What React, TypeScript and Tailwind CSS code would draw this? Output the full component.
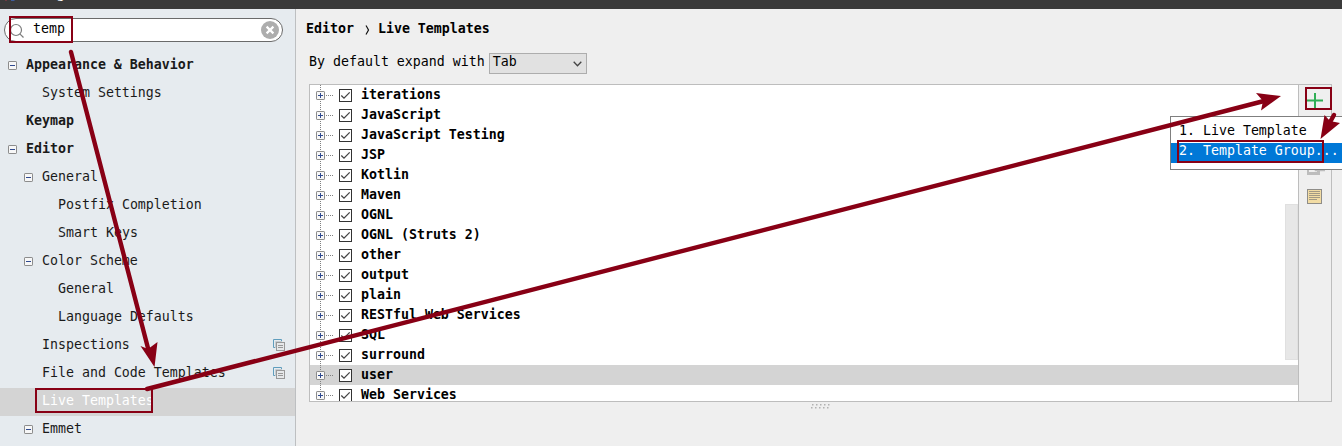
import React from "react";

type NavItem = {
  label: string;
  indent: string;
  bold?: boolean;
  expander?: boolean;
  copy?: boolean;
  selected?: boolean;
};

const nav: NavItem[] = [
  { label: "Appearance & Behavior", indent: "pl-2", bold: true, expander: true },
  { label: "System Settings", indent: "pl-6" },
  { label: "Keymap", indent: "pl-2", bold: true },
  { label: "Editor", indent: "pl-2", bold: true, expander: true },
  { label: "General", indent: "pl-6", expander: true },
  { label: "Postfix Completion", indent: "pl-10" },
  { label: "Smart Keys", indent: "pl-10" },
  { label: "Color Scheme", indent: "pl-6", expander: true },
  { label: "General", indent: "pl-10" },
  { label: "Language Defaults", indent: "pl-10" },
  { label: "Inspections", indent: "pl-6", copy: true },
  { label: "File and Code Templates", indent: "pl-6", copy: true },
  { label: "Live Templates", indent: "pl-6", selected: true },
  { label: "Emmet", indent: "pl-6", expander: true },
];

const groups = [
  "iterations",
  "JavaScript",
  "JavaScript Testing",
  "JSP",
  "Kotlin",
  "Maven",
  "OGNL",
  "OGNL (Struts 2)",
  "other",
  "output",
  "plain",
  "RESTful Web Services",
  "SQL",
  "surround",
  "user",
  "Web Services",
];

function Expander() {
  return (
    <svg width="9" height="9" viewBox="0 0 9 9" className="block shrink-0">
      <rect x="0.5" y="0.5" width="8" height="8" rx="0.6" fill="#f7f7f7" stroke="#8c8c8c" />
      <path d="M2 4.5H7" stroke="#2f4a90" />
    </svg>
  );
}

function CopyIcon() {
  return (
    <svg width="12" height="12" viewBox="0 0 12 12" className="block">
      <path d="M3 8.5H0.5V0.5H8.5V3" fill="none" stroke="#5f9dbd" />
      <path d="M2.500 9V2.500H9" fill="none" stroke="#c3ccd2" />
      <rect x="3.5" y="3.5" width="8" height="8" fill="#e6e8ea" stroke="#989898" />
      <path d="M5 6.5H10M5 8.5H10" stroke="#989898" />
    </svg>
  );
}

function SearchField() {
  return (
    <div className="ml-1 mt-[9px] flex h-6 w-[279px] shrink-0 items-center rounded-full border border-[#6a6a6a] bg-white pl-[5px] pr-[3px]">
      <svg width="15" height="16" viewBox="0 0 15 16" className="mt-px block">
        <circle cx="6" cy="7" r="5.5" fill="none" stroke="#7c7c7c" strokeWidth="1.2" />
        <path d="M9.8 10.8L13.5 14.5" stroke="#7c7c7c" strokeWidth="1.2" />
      </svg>
      <span className="ml-2 flex-1 pb-[3px]">temp</span>
      <svg width="18" height="18" viewBox="0 0 18 18" className="block">
        <circle cx="9" cy="9" r="9" fill="#adadad" />
        <path d="M5.6 5.6L12.4 12.4M12.4 5.6L5.6 12.4" stroke="#fff" strokeWidth="2.2" />
      </svg>
    </div>
  );
}

function Sidebar() {
  return (
    <aside className="flex w-[296px] shrink-0 flex-col overflow-hidden border-r border-[#bdbfc1] bg-[#e6ebef]">
      <SearchField />
      <ul className="mt-2.5">
        {nav.map((n, i) => (
          <li
            key={i}
            className={`flex h-7 items-center ${n.indent} ${n.bold ? "font-bold" : ""} ${n.selected ? "bg-[#d4d4d4] text-white" : "text-[#1a1a1a]"}`}
          >
            <span className="-mt-px w-[18px] shrink-0">{n.expander && <Expander />}</span>
            <span className="flex-1 pb-0.5">{n.label}</span>
            {n.copy && (
              <span className="-mt-0.5 mr-2.5">
                <CopyIcon />
              </span>
            )}
          </li>
        ))}
      </ul>
    </aside>
  );
}

function GroupRow({ name, selected }: { name: string; selected: boolean }) {
  return (
    <li className={`flex h-5 items-center ${selected ? "bg-[#d4d4d4]" : ""}`}>
      <svg width="18" height="20" viewBox="0 0 18 20" className="ml-1.5 block shrink-0">
        <path d="M4.5 0V20" stroke="#808080" strokeDasharray="1 1" />
        <path d="M10 10.5H18" stroke="#808080" strokeDasharray="1 1" />
        <rect x="0.5" y="6.5" width="8" height="8" rx="0.6" fill="#f7f7f7" stroke="#8c8c8c" />
        <path d="M2 10.5H7M4.5 8V13" stroke="#2f4a90" />
      </svg>
      <svg width="13" height="20" viewBox="0 0 13 20" className="ml-[5px] block shrink-0">
        <rect x="0.5" y="4.5" width="12" height="12" fill="#fff" stroke="#333" />
        <path d="M2.3 10.5L5 13.2L10.7 7.4" fill="none" stroke="#444" strokeWidth="1.3" />
      </svg>
      <span className="ml-[9px] pb-px font-bold">{name}</span>
    </li>
  );
}

function Toolbar() {
  return (
    <div className="flex w-[33px] shrink-0 flex-col border-l border-[#bdbdbd] bg-[#efefef] pl-2">
      <svg width="16" height="16" viewBox="0 0 16 16" className="mt-2 block">
        <path d="M0 7.500H16M8 0V16" stroke="#2fae55" strokeWidth="2" />
      </svg>
      <svg width="18" height="16" viewBox="0 0 18 16" className="mt-[50px] block">
        <rect x="0.500" y="3" width="11" height="11.500" fill="none" stroke="#bdbdbd" strokeWidth="3" />
        <rect x="9" y="4" width="8" height="7" fill="#efefef" stroke="#bdbdbd" strokeWidth="2.500" />
      </svg>
      <svg width="15" height="15" viewBox="0 0 15 15" className="mt-3.5 block">
        <rect x="0.5" y="0.5" width="14" height="14" fill="#f2dca4" stroke="#8f8d88" />
        <path d="M2 2.5H13M2 4.5H13M2 6.5H13M2 8.5H13M2 10.5H10" stroke="#a39a84" />
      </svg>
    </div>
  );
}

function Popup() {
  return (
    <div className="absolute left-[1170px] top-[116px] h-[54px] w-[200px] border border-[#7f7f7f] bg-white pt-1.5">
      <div className="h-5 whitespace-pre pl-2 leading-4">1. Live Template</div>
      <div className="h-5 whitespace-pre bg-[#0078d7] pl-2 leading-4 text-white">2. Template Group...</div>
    </div>
  );
}

function Annotations() {
  return (
    <svg width="1342" height="446" viewBox="0 0 1342 446" className="absolute left-0 top-0">
      <g fill="none" stroke="#880015" strokeWidth="2">
        <rect x="10" y="17" width="62" height="25" />
        <rect x="36" y="389" width="116" height="23" />
        <rect x="1306" y="88" width="25" height="21" />
        <rect x="1178" y="141" width="145" height="21" />
      </g>
      <g stroke="#880015" strokeWidth="4.4" strokeLinecap="round">
        <path d="M71 52L149 352" />
        <path d="M147 389L1264 101" />
        <path d="M1334 115L1329 124" />
      </g>
      <g fill="#880015">
        <path d="M154.5 367L140.5 346L148 349L157.5 342Z" />
        <path d="M1281 96L1261 110.500L1263 101L1256 93Z" />
        <path d="M1320.500 139L1324.500 115L1330 121L1340 123Z" />
      </g>
    </svg>
  );
}

export default function App() {
  return (
    <div className="relative flex h-[446px] w-[1342px] flex-col overflow-hidden bg-[#efefef] font-['DejaVu_Sans_Mono',monospace] text-[13.288px] leading-5 text-black">
      <header className="flex h-[9px] shrink-0 overflow-hidden bg-[#3a3a3a]">
        <svg width="12" height="2" viewBox="0 0 12 2" className="ml-[5px] block">
          <path d="M0 0H2L1 1Z" fill="#a33a4b" />
          <path d="M6 0H10L9 1H6Z" fill="#3f5d9c" />
        </svg>
        <span className="-mt-[14px] ml-2 font-['Open_Sans',sans-serif] text-xs text-white">Settings</span>
      </header>
      <div className="flex min-h-0 flex-1">
        <Sidebar />
        <main className="flex min-w-0 flex-1 flex-col">
          <div className="mt-[9px] flex h-5 items-center pl-2.5 font-bold">
            <span className="mt-0.5">Editor</span>
            <svg width="5" height="10" viewBox="0 0 5 10" className="ml-[11px] mt-1 block">
              <path d="M1 0.500Q2.500 3 3.500 5Q2.500 7 1 9.500" fill="none" stroke="#111" strokeWidth="1.2" />
            </svg>
            <span className="ml-2 mt-0.5">Live Templates</span>
          </div>
          <div className="mt-[15px] flex h-[21px] pl-[13px]">
            <span className="-mt-px leading-5">By default expand with</span>
            <div className="ml-1 flex w-[98px] items-center justify-between border border-[#adadad] bg-[#e1e1e1] pl-[3px] pr-1">
              <span className="pb-[3px]">Tab</span>
              <svg width="9" height="6" viewBox="0 0 9 6" className="block">
                <path d="M0.700 0.700L4.500 4.700L8.300 0.700" fill="none" stroke="#444" strokeWidth="1.3" />
              </svg>
            </div>
          </div>
          <section className="ml-[13px] mt-2.5 flex h-[318px] w-[1023px] shrink-0 border border-[#bdbdbd] bg-white">
            <div className="relative flex-1 overflow-hidden">
              <ul>
                {groups.map((g) => (
                  <GroupRow key={g} name={g} selected={g === "user"} />
                ))}
              </ul>
              <div className="absolute right-0 top-[119px] h-[156px] w-[13px] border border-[#e0e0e0] bg-[#e7e7e7]" />
            </div>
            <Toolbar />
          </section>
          <svg width="20" height="6" viewBox="0 0 20 6" className="ml-[514px] mt-[2px] block">
            {[2, 6, 10, 14, 18].map((x) => (
              <g key={x} fill="#b2b2b2">
                <rect x={x} y="0" width="1.500" height="1.500" />
                <rect x={x - 1} y="3" width="1.500" height="1.500" />
              </g>
            ))}
          </svg>
        </main>
      </div>
      <Popup />
      <Annotations />
    </div>
  );
}
